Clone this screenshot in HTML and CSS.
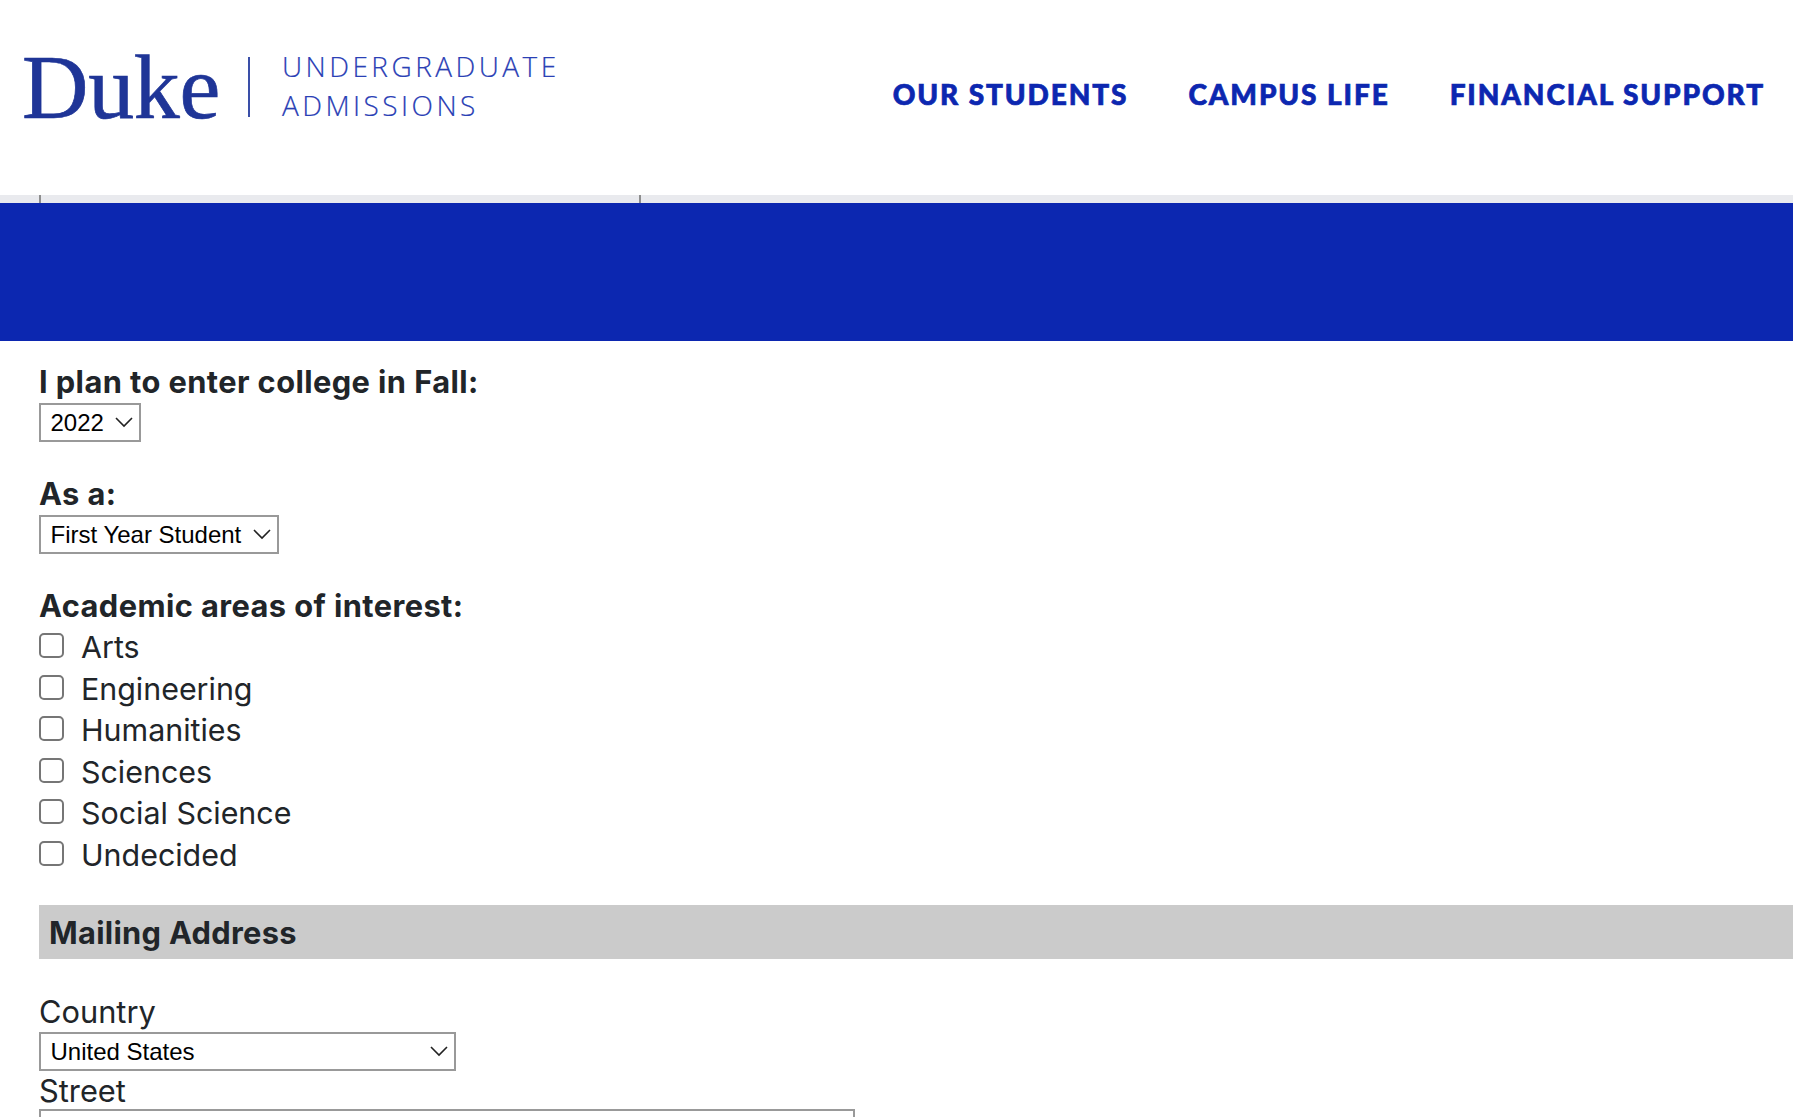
FILE: index.html
```html
<!DOCTYPE html>
<html lang="en">
<head>
    <meta charset="UTF-8">
    <meta name="viewport" content="width=device-width, initial-scale=1.0">
    <title>Duke Undergraduate Admissions</title>
    <link rel="stylesheet" href="styles.css">
</head>
<body>
    <header class="site-header">
        <a class="logo" href="#">
            <span class="logo-duke">Duke</span>
            <span class="logo-rule"></span>
            <span class="logo-unit">UNDERGRADUATE<br>ADMISSIONS</span>
        </a>
        <nav class="main-nav">
            <a href="#">OUR STUDENTS</a>
            <a href="#">CAMPUS LIFE</a>
            <a href="#">FINANCIAL SUPPORT</a>
        </nav>
    </header>
    <div class="tab-strip"><div class="tab-mark"></div></div>
    <div class="blue-band"></div>
    <form class="inquiry-form">
        <div class="group">
            <label class="strong-label" for="term">I plan to enter college in Fall:</label>
            <select id="term" class="pick pick-term"><option>2022</option></select>
        </div>
        <div class="group">
            <label class="strong-label" for="type">As a:</label>
            <select id="type" class="pick pick-type"><option>First Year Student</option></select>
        </div>
        <div class="group">
            <div class="strong-label">Academic areas of interest:</div>
            <div class="checks">
                <label class="check"><input type="checkbox">Arts</label>
                <label class="check"><input type="checkbox">Engineering</label>
                <label class="check"><input type="checkbox">Humanities</label>
                <label class="check"><input type="checkbox">Sciences</label>
                <label class="check"><input type="checkbox">Social Science</label>
                <label class="check"><input type="checkbox">Undecided</label>
            </div>
        </div>
        <h2 class="section-title">Mailing Address</h2>
        <label class="field-label" for="country">Country</label>
        <select id="country" class="pick pick-country"><option>United States</option></select>
        <label class="field-label" for="street">Street</label>
        <input id="street" class="text-input" type="text">
    </form>
</body>
</html>
```

FILE: styles.css
```css
html, body { height: 1117px; overflow: hidden; }
body { margin: 0; background: #fff; color: #212529; font-family: Inter, sans-serif; font-size: 30.8px; }

.site-header { display: flex; justify-content: space-between; height: 195px; padding: 0 28px 0 22px; box-sizing: border-box; }
.logo { display: flex; align-items: flex-start; text-decoration: none; padding-top: 37px; }
.logo-duke { font-family: "Liberation Serif", serif; font-size: 92px; line-height: 100px; color: #1f3597; letter-spacing: -0.3px; width: 226px; -webkit-text-stroke: 0.7px #1f3597; }
.logo-rule { width: 2px; height: 60px; margin-top: 20px; background: #3a4fa8; }
.logo-unit { font-family: "Open Sans", sans-serif; font-weight: 300; font-size: 28px; line-height: 39px; letter-spacing: 3.45px; color: #2a40b5; -webkit-text-stroke: 0.2px #2a40b5; margin: 10px 0 0 32px; }
.main-nav { display: flex; gap: 60px; padding-top: 72px; }
.main-nav a { font-family: Lato, sans-serif; font-weight: 900; font-size: 28px; line-height: 44px; letter-spacing: 1.9px; color: #0c27b0; text-decoration: none; height: 44px; -webkit-text-stroke: 0.7px #0c27b0; }

.tab-strip { height: 8px; background: #e9eaee; padding-left: 39px; }
.tab-mark { width: 602px; height: 8px; box-sizing: border-box; border-left: 2px solid #8e8e8e; border-right: 2px solid #8e8e8e; }
.blue-band { height: 138px; background: #0c27b0; }

.inquiry-form { padding: 20px 0 0 39px; }
.group { margin-bottom: 31px; }
.strong-label { display: block; font-size: 30.8px; font-weight: 700; line-height: 42px; letter-spacing: 0.42px; }
.pick { display: block; height: 39px; box-sizing: border-box; margin: 0; padding: 0 30px 0 9.5px; border: 2px solid #999; border-radius: 0; background: #fff url("data:image/svg+xml,%3Csvg xmlns='http://www.w3.org/2000/svg' width='18' height='11' viewBox='0 0 18 11'%3E%3Cpath d='M1 1l8 8 8-8' fill='none' stroke='%23222' stroke-width='1.6'/%3E%3C/svg%3E") no-repeat right 6px center; font-family: "Liberation Sans", Arial, sans-serif; font-size: 24px; color: #000; appearance: none; -webkit-appearance: none; }
.pick-term { width: 102px; }
.pick-type { width: 240px; }
.pick-country { width: 417px; margin: 2px 0 1px; }

.check { display: flex; align-items: flex-start; height: 41.6px; font-size: 30.4px; line-height: 41.6px; }
.check input { appearance: none; -webkit-appearance: none; width: 25px; height: 25px; box-sizing: border-box; margin: 6px 17px 0 0; border: 2px solid #767676; border-radius: 5px; background: #fff; }

.section-title { margin: -3px 0 34px; height: 54px; padding-left: 10px; background: #cbcbcb; font-size: 30.8px; font-weight: 700; line-height: 55px; letter-spacing: 0.3px; }
.field-label { display: block; line-height: 37px; }
.text-input { display: block; width: 816px; height: 39px; box-sizing: border-box; margin: 0; border: 2px solid #999; background: #fff; }
```
